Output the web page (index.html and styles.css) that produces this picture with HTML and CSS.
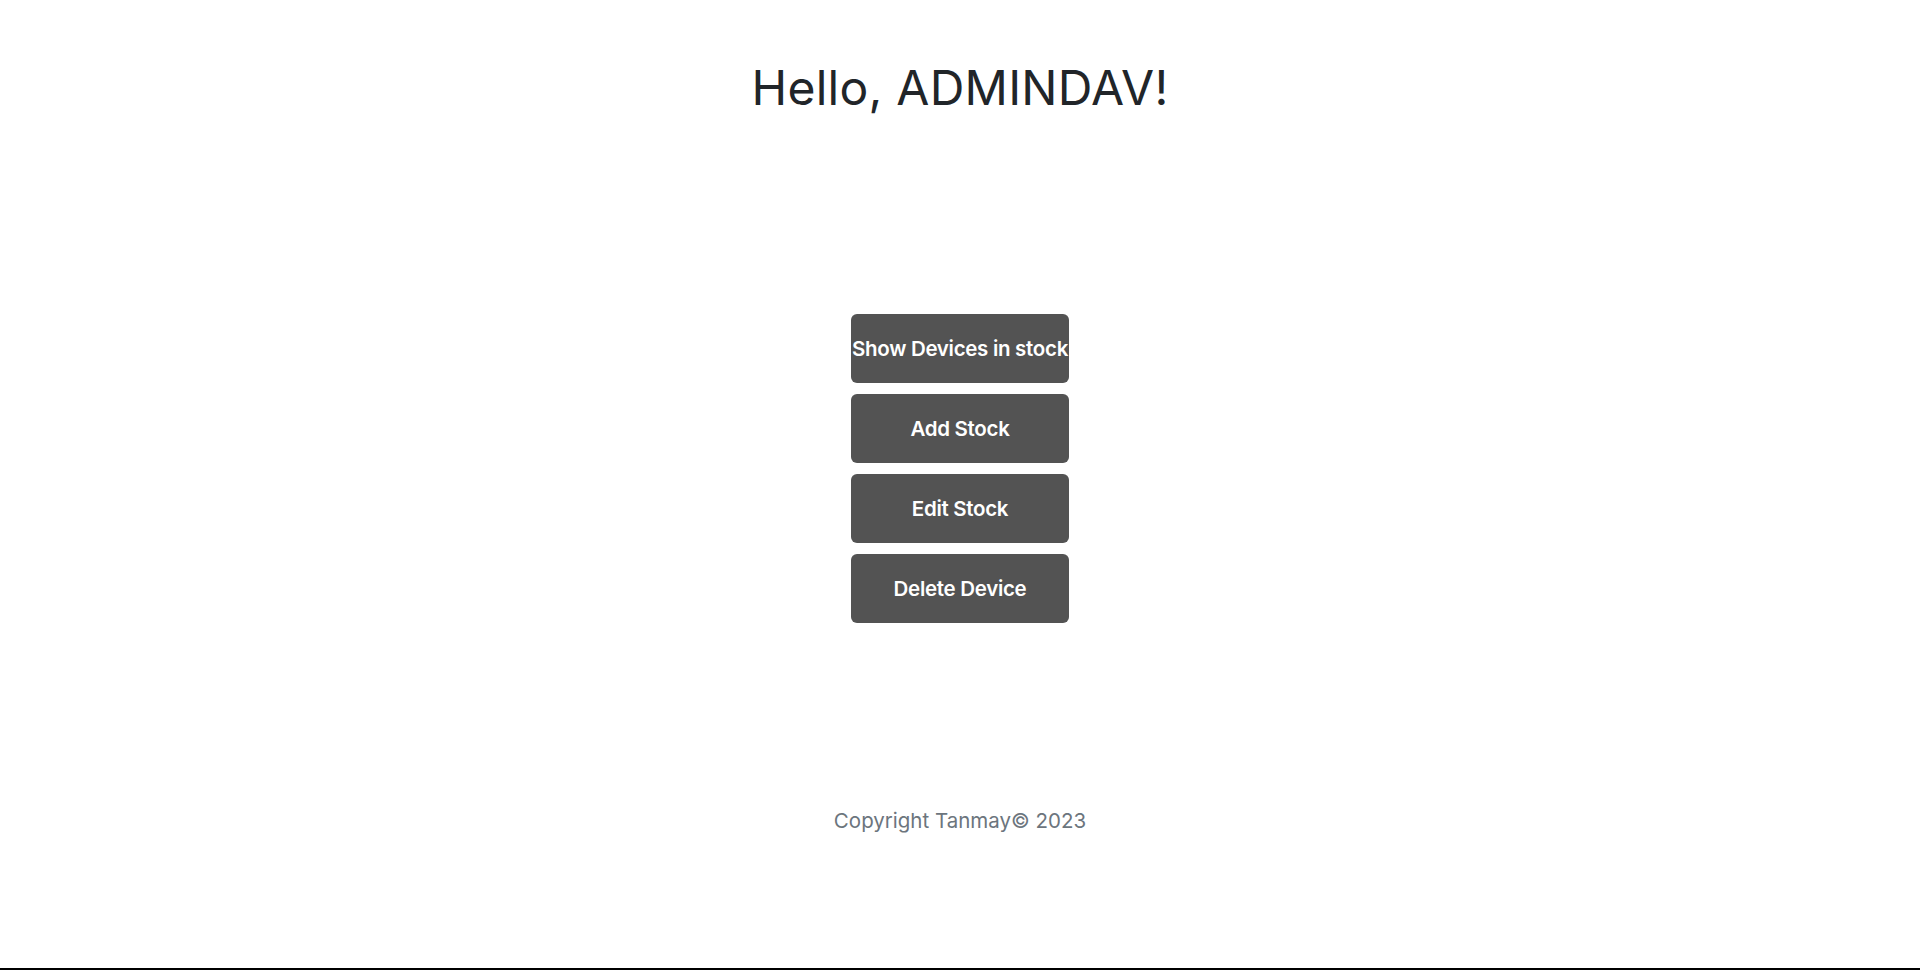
FILE: index.html
```html
<!DOCTYPE html>
<html lang="en">
<head>
<meta charset="utf-8">
<title>Admin</title>
<link rel="stylesheet" href="styles.css">
</head>
<body>
<div class="page">
  <header class="hero">
    <h1 class="title">Hello, ADMINDAV!</h1>
  </header>
  <main class="actions">
    <button class="btn">Show Devices in stock</button>
    <button class="btn">Add Stock</button>
    <button class="btn">Edit Stock</button>
    <button class="btn">Delete Device</button>
  </main>
  <footer class="foot">
    <p class="copy">Copyright Tanmay© 2023</p>
  </footer>
</div>
</body>
</html>
```
FILE: styles.css
```css
html, body {
  margin: 0;
  padding: 0;
  background: #fff;
}
body {
  font-family: Inter, "Open Sans", sans-serif;
  color: #212529;
}
.page {
  height: 968px;
  border-bottom: 2px solid #000;
  display: flex;
  flex-direction: column;
  align-items: center;
}
.hero {
  padding-top: 59px;
}
.title {
  margin: 0;
  font-size: 48px;
  line-height: 58px;
  font-weight: 400;
  text-align: center;
  letter-spacing: 0.25px;
  color: #212529;
}
.actions {
  margin-top: 197px;
  display: flex;
  flex-direction: column;
  gap: 11px;
}
.btn {
  width: 218px;
  height: 69px;
  padding: 0;
  border: none;
  border-radius: 6px;
  background: #535353;
  color: #fff;
  font-family: Inter, "Open Sans", sans-serif;
  font-size: 20.5px;
  font-weight: 600;
  white-space: nowrap;
  overflow: hidden;
  display: flex;
  align-items: center;
  justify-content: center;
  letter-spacing: -0.3px;
}
.foot {
  margin-top: 185px;
}
.copy {
  margin: 0;
  font-size: 20.5px;
  line-height: 26px;
  color: #6c757d;
}
```
